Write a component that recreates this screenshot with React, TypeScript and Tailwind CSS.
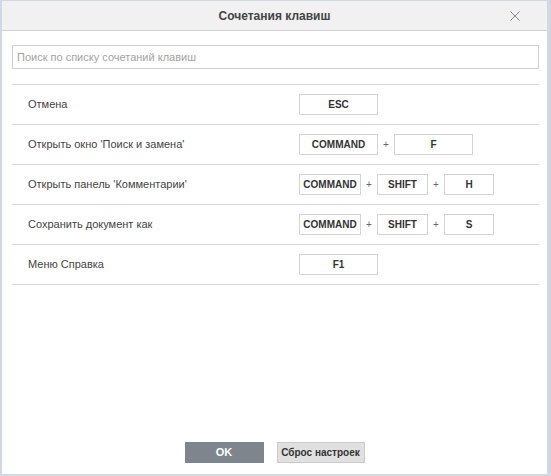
import React from 'react'

type Shortcut = {
  label: string
  keys: { name: string; width: string }[]
}

const shortcuts: Shortcut[] = [
  { label: 'Отмена', keys: [{ name: 'ESC', width: 'w-[79px]' }] },
  {
    label: "Открыть окно 'Поиск и замена'",
    keys: [
      { name: 'COMMAND', width: 'w-[79px]' },
      { name: 'F', width: 'w-[79px]' },
    ],
  },
  {
    label: "Открыть панель 'Комментарии'",
    keys: [
      { name: 'COMMAND', width: 'w-[62px]' },
      { name: 'SHIFT', width: 'w-[51px]' },
      { name: 'H', width: 'w-[50px]' },
    ],
  },
  {
    label: 'Сохранить документ как',
    keys: [
      { name: 'COMMAND', width: 'w-[62px]' },
      { name: 'SHIFT', width: 'w-[51px]' },
      { name: 'S', width: 'w-[50px]' },
    ],
  },
  { label: 'Меню Справка', keys: [{ name: 'F1', width: 'w-[79px]' }] },
]

const KeyBox = ({ name, width }: { name: string; width: string }) => (
  <div
    className={`${width} h-[21px] flex items-center justify-center border border-[#d4d4d4] bg-white text-[10px] font-bold text-[#333]`}
  >
    {name}
  </div>
)

const ShortcutRow = ({ item }: { item: Shortcut }) => (
  <div className="h-[40px] flex items-center border-b border-[#d6d6d6]">
    <div className="w-[287px] pl-[16px] text-[11px] text-[#444]">{item.label}</div>
    <div className="flex items-center">
      {item.keys.map((k, i) => (
        <React.Fragment key={i}>
          {i > 0 && <span className="w-[16px] text-center text-[10px] text-[#666]">+</span>}
          <KeyBox name={k.name} width={k.width} />
        </React.Fragment>
      ))}
    </div>
  </div>
)

export default function App() {
  return (
    <div
      className="w-[551px] h-[476px] bg-[#cfd8e3] pl-[2px] pt-[1px] pr-[4px] pb-[2px]"
      style={{ fontFamily: '"Liberation Sans", Arial, sans-serif' }}
    >
      <div className="h-full flex flex-col bg-white">
        {/* header */}
        <div className="relative h-[30px] shrink-0 flex items-center justify-center bg-[#f1f1f1] border-b border-[#d2d2d2]">
          <span className="text-[12px] font-bold text-[#444]">Сочетания клавиш</span>
          <svg
            className="absolute right-[27px] top-[10px]"
            width="10"
            height="10"
            viewBox="0 0 10 10"
            fill="none"
            stroke="#8a8a8a"
            strokeWidth="1"
          >
            <path d="M0.5 0.5L9.5 9.5M9.5 0.5L0.5 9.5" />
          </svg>
        </div>

        <div className="flex-1 flex flex-col pl-[10px] pr-[8px]">
          <input
            type="text"
            placeholder="Поиск по списку сочетаний клавиш"
            className="mt-[14px] h-[24px] w-full border border-[#cfcfcf] px-[4px] text-[11px] text-[#333] placeholder:text-[#a3a3a3] outline-none"
          />

          <div className="mt-[15px] border-t border-[#d6d6d6]">
            {shortcuts.map((s) => (
              <ShortcutRow key={s.label} item={s} />
            ))}
          </div>

          {/* footer buttons */}
          <div className="mt-auto mb-[11px] flex justify-center gap-[13px] pr-[2px]">
            <button className="w-[79px] h-[21px] bg-[#7e858c] text-white text-[11px] font-bold">
              OK
            </button>
            <button className="w-[88px] h-[21px] px-0 whitespace-nowrap bg-[#e0e0e0] border border-[#cbcbcb] text-[#333] text-[10px] font-bold">
              Сброс настроек
            </button>
          </div>
        </div>
      </div>
    </div>
  )
}
